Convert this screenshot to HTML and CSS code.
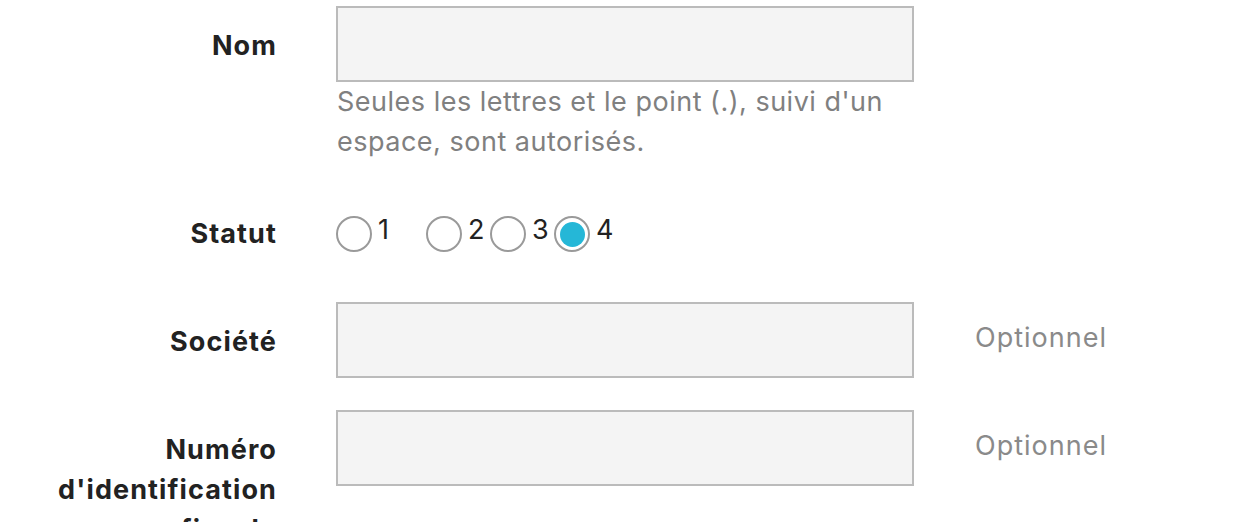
FILE: index.html
```html
<!DOCTYPE html>
<html lang="fr">
<head>
<meta charset="utf-8">
<title>Formulaire</title>
<link rel="stylesheet" href="styles.css">
</head>
<body>
<form class="form">
  <div class="label">Nom</div>
  <div class="field">
    <div class="input"></div>
    <p class="help">Seules les lettres et le point (.), suivi d'un espace, sont autorisés.</p>
  </div>
  <div class="extra"></div>

  <div class="label">Statut</div>
  <div class="field radios">
    <span class="radio-item r1"><span class="radio"></span><span class="rlabel">1</span></span>
    <span class="radio-item"><span class="radio"></span><span class="rlabel">2</span></span>
    <span class="radio-item"><span class="radio"></span><span class="rlabel">3</span></span>
    <span class="radio-item"><span class="radio checked"></span><span class="rlabel">4</span></span>
  </div>
  <div class="extra"></div>

  <div class="label">Société</div>
  <div class="field"><div class="input"></div></div>
  <div class="extra">Optionnel</div>

  <div class="label">Numéro d'identification fiscale</div>
  <div class="field"><div class="input"></div></div>
  <div class="extra">Optionnel</div>
</form>
</body>
</html>
```
FILE: styles.css
```css
html, body {
  margin: 0;
  padding: 0;
  background: #fff;
}
body {
  padding-top: 6px;
  font-family: Inter, "Open Sans", "Liberation Sans", sans-serif;
  color: #222;
  overflow: hidden;
  height: 522px;
  box-sizing: border-box;
}
.form {
  display: grid;
  grid-template-columns: 276px 578px auto;
  column-gap: 60px;
  row-gap: 32px;
}
.label {
  text-align: right;
  font-weight: 700;
  font-size: 27px;
  letter-spacing: 1.1px;
  line-height: 40px;
  padding-top: 20px;
  color: #222;
  width: 240px;
  justify-self: end;
  margin-right: -1px;
}
.field {
  min-height: 76px;
}
.input {
  box-sizing: border-box;
  height: 76px;
  border: 2px solid #bbb;
  background: #f4f4f4;
}
.help {
  margin: 0;
  padding-left: 1px;
  font-size: 27px;
  letter-spacing: 0.5px;
  line-height: 40px;
  color: #808080;
}
.extra {
  font-size: 27px;
  letter-spacing: 1px;
  line-height: 40px;
  padding-top: 16px;
  color: #8a8a8a;
  margin-left: 1px;
}
.radios {
  display: flex;
  align-items: flex-start;
  padding-top: 22px;
  box-sizing: border-box;
}
.radio-item {
  display: flex;
  align-items: flex-start;
  width: 64px;
}
.r1 {
  width: 90px;
}
.radio {
  box-sizing: border-box;
  flex: none;
  width: 36px;
  height: 36px;
  border-radius: 50%;
  border: 2px solid #9a9a9a;
  background: #fff;
  display: flex;
  align-items: center;
  justify-content: center;
}
.radio.checked::after {
  content: "";
  width: 25px;
  height: 25px;
  border-radius: 50%;
  background: #25b7d7;
}
.rlabel {
  font-size: 27px;
  line-height: 30px;
  margin-left: 6px;
  color: #222;
  margin-top: -1px;
}
```
